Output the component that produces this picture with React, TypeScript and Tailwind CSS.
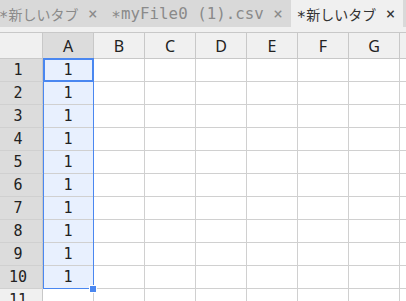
import React from 'react';

const MONO = "font-['DejaVu_Sans_Mono',monospace]";
const CJK = "font-['Noto_Sans_CJK_JP',sans-serif]";

const tabs = [
  { label: '新しいタブ', cjk: true, active: false },
  { label: 'myFile0 (1).csv', cjk: false, active: false },
  { label: '新しいタブ', cjk: true, active: true },
];

const COLS = ['A', 'B', 'C', 'D', 'E', 'F', 'G', 'H'];
const ROWS = [1, 2, 3, 4, 5, 6, 7, 8, 9, 10, 11];

function Tab({ label, cjk, active }: { label: string; cjk: boolean; active: boolean }) {
  return (
    <div
      className={`flex items-center h-full pl-[6px] pr-[8px] shrink-0 whitespace-pre ${
        active ? 'bg-[#f0f0f0] text-[#333]' : 'text-[#8a8a8a]'
      }`}
    >
      <span className={`${MONO} text-[15.8px]`}>∗</span>
      {cjk ? (
        <span className={`${CJK} text-[14px] leading-none`}>{label}</span>
      ) : (
        <span className={`${MONO} text-[15.8px]`}>{label}</span>
      )}
      <span className={`${MONO} text-[15.8px]`}> ×</span>
    </div>
  );
}

export default function App() {
  return (
    <div className="w-[406px] h-[301px] overflow-hidden bg-[#f0f0f0] select-none">
      {/* tab strip */}
      <div className="flex h-[27px] bg-[#d9d9d9] -ml-[7px]">
        {tabs.map((t, i) => (
          <Tab key={i} {...t} />
        ))}
      </div>
      <div className="h-[5px]" />

      {/* sheet */}
      <div className="relative border-t border-[#c8c8c8]">
        <div className="flex h-[26px] border-b border-[#c8c8c8]">
          <div className="w-[43px] shrink-0 border-r border-[#c8c8c8] bg-[#f0f0f0]" />
          {COLS.map((c) => (
            <div
              key={c}
              className={`w-[51px] shrink-0 border-r border-[#c8c8c8] flex items-center justify-center font-['Noto_Sans',sans-serif] text-[16px] text-[#222] ${
                c === 'A' ? 'bg-[#dcdcdc]' : 'bg-[#f0f0f0]'
              }`}
            >
              {c}
            </div>
          ))}
        </div>

        {ROWS.map((r) => (
          <div key={r} className="flex h-[23px] border-b border-[#d0d0d0]">
            <div
              className={`w-[43px] shrink-0 border-r border-[#c8c8c8] flex items-center justify-center pr-[6px] ${MONO} text-[15px] text-[#222] ${
                r <= 10 ? 'bg-[#dcdcdc]' : 'bg-[#f0f0f0]'
              }`}
            >
              {r}
            </div>
            {COLS.map((c) => (
              <div
                key={c}
                className={`w-[51px] shrink-0 border-r border-[#d0d0d0] flex items-center justify-center ${MONO} text-[15px] text-[#222] ${
                  c === 'A' && r <= 10 ? 'bg-[#e8f0fe]' : 'bg-white'
                }`}
              >
                {c === 'A' && r <= 10 ? '1' : ''}
              </div>
            ))}
          </div>
        ))}

        {/* selection range A1:A10 */}
        <div className="absolute left-[43px] top-[25px] w-[51px] h-[231px] border border-[#4a87f0] pointer-events-none" />
        {/* active cell A1 */}
        <div className="absolute left-[43px] top-[25px] w-[51px] h-[24px] border-2 border-[#4a87f0] pointer-events-none" />
        {/* fill handle */}
        <div className="absolute left-[89px] top-[252px] w-[8px] h-[8px] bg-[#4a87f0] border border-white" />
      </div>
    </div>
  );
}
